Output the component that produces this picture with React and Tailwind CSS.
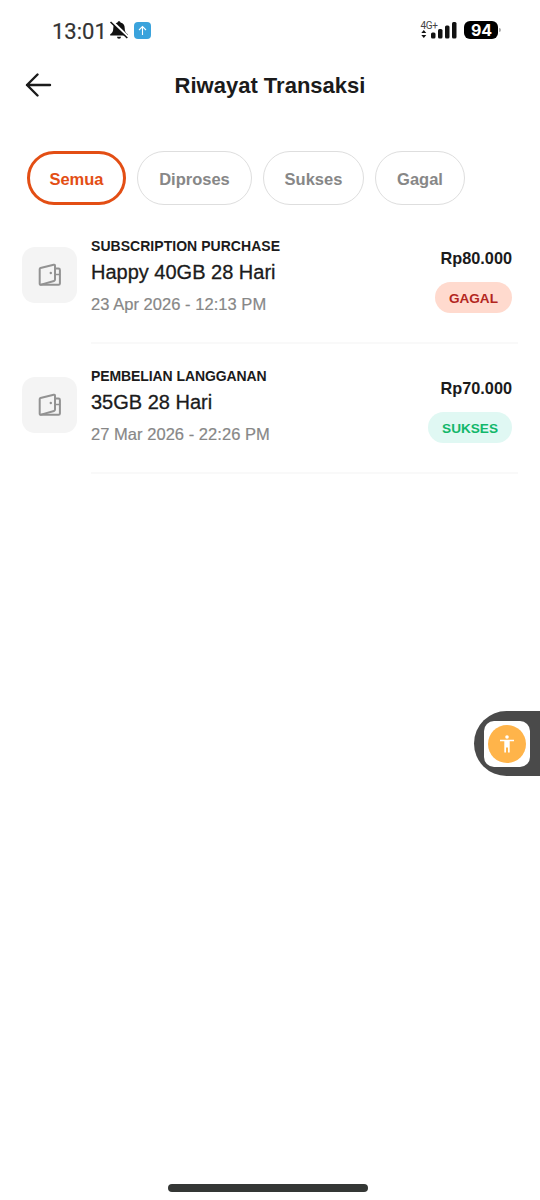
const transactions = [
  {
    id: 1,
    category: 'SUBSCRIPTION PURCHASE',
    name: 'Happy 40GB 28 Hari',
    date: '23 Apr 2026 - 12:13 PM',
    amount: 'Rp80.000',
    status: 'GAGAL',
    badge: 'bg-[#ffdace] text-[#b3261e]',
    tracking: 'tracking-[0.04px]',
  },
  {
    id: 2,
    category: 'PEMBELIAN LANGGANAN',
    name: '35GB 28 Hari',
    date: '27 Mar 2026 - 22:26 PM',
    amount: 'Rp70.000',
    status: 'SUKSES',
    badge: 'bg-[#e0f8f3] text-[#12b76a]',
    tracking: 'tracking-[-0.09px]',
  },
];

const filters = [
  { label: 'Semua', size: 'w-[99px]', active: true },
  { label: 'Diproses', size: 'w-[115px]' },
  { label: 'Sukses', size: 'w-[101px]' },
  { label: 'Gagal', size: 'w-[90px]' },
];

function StatusBar() {
  return (
    <div className="flex h-[60px] items-center justify-between pr-[39px] pl-[52px]">
      <div className="flex items-center">
        <span className="w-[57px] pt-[3px] font-['Roboto',sans-serif] text-[22px] leading-none text-[#333] [-webkit-text-stroke:0.2px_#333]">13:01</span>
        <svg className="h-5 w-5" viewBox="0 0 20 20">
          <path d="M10 1.2c-.9 0-1.4.6-1.5 1.4C5.500 3.300 4.300 5.500 4.300 8c0 3.500-1 4.900-3.100 6.300v1.300h17.600v-1.300C16.700 12.900 15.700 11.500 15.700 8c0-2.500-1.200-4.700-4.200-5.400C11.400 1.800 10.900 1.200 10 1.200z" fill="#111" />
          <path d="M8 16.800h4a2 2 0 0 1-4 0z" fill="#111" />
          <path d="M2.800 1.200 19.500 17.200" stroke="#fff" strokeWidth="2.600" />
          <path d="M1.500 2 18.300 18" stroke="#111" strokeWidth="1.600" />
        </svg>
        <span className="ml-[5px] flex h-[17px] w-[17px] items-center justify-center rounded-[4px] bg-[#3ba3dc]">
          <svg className="h-[11px] w-[11px]" viewBox="0 0 11 11" fill="none" stroke="#fff" strokeWidth="1.1">
            <path d="M5.500 10V1.500M2 5l3.500-3.500L9 5" />
          </svg>
        </span>
      </div>
      <div className="flex items-center">
        <svg className="h-[22px] w-[38px]" viewBox="0 0 38 22">
          <text x="0.500" y="9.500" fontFamily="Roboto, sans-serif" fontSize="10" fill="#444" textLength="17.500">4G+</text>
          <path d="M1.300 14 3.800 11l2.500 3zM1.300 16 3.800 19l2.500-3z" fill="#111" />
          <rect x="11" y="13.500" width="4.500" height="6" rx="1.500" fill="#111" />
          <rect x="18" y="10" width="4.500" height="9.500" rx="1.500" fill="#111" />
          <rect x="25" y="6.500" width="4.500" height="13" rx="1.500" fill="#111" />
          <rect x="32" y="3" width="4.500" height="16.500" rx="1.500" fill="#111" />
        </svg>
        <span className="ml-[6px] flex h-[18px] w-[34px] items-center justify-center rounded-[6px] bg-black pl-px font-['Inter',sans-serif] text-[16px] leading-none font-bold text-white">94</span>
        <span className="ml-px h-1 w-[2px] rounded-r-full bg-[#aaa]" />
      </div>
    </div>
  );
}

function WalletIcon() {
  return (
    <svg className="h-6 w-6" viewBox="0 0 24 24" fill="none" stroke="#929292" strokeWidth="2" strokeLinejoin="round" strokeLinecap="round">
      <path d="M1.700 5.900Q1.700 5.200 2.500 5L15.700 1.700Q17 1.400 17 2.700V16.600Q17 17.700 16 18L3 21.600Q1.700 22 1.700 20.800z" />
      <path d="M17 5.500h3.500q1.400 0 1.400 1.400v13.500q0 1.400-1.400 1.400H3" />
      <path d="M17.500 11.500h4" strokeWidth="1.600" />
      <circle cx="12.800" cy="10" r="1.200" fill="#929292" stroke="none" />
    </svg>
  );
}

function Transaction({ item }) {
  return (
    <li className="flex h-[130px] pl-[22px]">
      <div className="mt-[17px] flex h-[56px] w-[55px] shrink-0 items-center justify-center rounded-[13px] bg-[#f4f4f4]">
        <WalletIcon />
      </div>
      <div className="ml-[14px] flex h-[114px] w-[427px] justify-between border-b-2 border-[#f9f9f9] pr-[6px]">
        <div className="whitespace-nowrap">
          <div className={`mt-[8px] text-[14px] leading-4 font-bold text-[#1b1b1b] ${item.tracking}`}>{item.category}</div>
          <div className="mt-[6px] text-[20px] leading-6 text-[#1b1b1b] [-webkit-text-stroke:0.3px_#1b1b1b]">{item.name}</div>
          <div className="mt-[10px] text-[16.5px] leading-5 tracking-[0.04px] text-[#878787] [-webkit-text-stroke:0.2px_#878787]">{item.date}</div>
        </div>
        <div className="flex flex-col items-end">
          <div className="mt-[18px] text-[16.3px] leading-5 font-bold text-[#1b1b1b]">{item.amount}</div>
          <div className={`mt-[14px] flex h-[31px] items-center rounded-full px-[14px] pt-[2px] text-[13.6px] leading-none font-bold ${item.badge}`}>
            {item.status}
          </div>
        </div>
      </div>
    </li>
  );
}

export default function App() {
  return (
    <div className="relative flex h-[1200px] w-[540px] flex-col overflow-hidden bg-white font-['Liberation_Sans',Arial,sans-serif]">
      <StatusBar />
      <header className="grid h-[50px] grid-cols-[64px_1fr_64px] items-center">
        <button className="ml-[25px] h-6 w-[27px]" aria-label="Kembali">
          <svg className="h-6 w-[27px]" viewBox="0 0 27 24" fill="none" stroke="#1b1b1b" strokeWidth="2.400" strokeLinecap="round" strokeLinejoin="round">
            <path d="M25 12H2M12.500 1.500 2 12l10.500 10.500" />
          </svg>
        </button>
        <h1 className="pt-px text-center text-[22px] leading-7 font-bold text-[#1b1b1b]">Riwayat Transaksi</h1>
      </header>
      <nav className="mt-[41px] ml-[27px] flex gap-[11px]">
        {filters.map((f) => (
          <button
            key={f.label}
            className={`flex h-[54px] items-center justify-center rounded-full pt-[2px] text-[16.5px] font-bold ${f.size} ${
              f.active ? 'border-3 border-[#e34e14] text-[#e34e14]' : 'border-[1.5px] border-[#dedede] text-[#878787]'
            }`}
          >
            {f.label}
          </button>
        ))}
      </nav>
      <ul className="mt-[25px]">
        {transactions.map((item) => (
          <Transaction key={item.id} item={item} />
        ))}
      </ul>
      <button className="absolute top-[711px] right-0 flex h-[65px] w-[66px] items-center rounded-l-full bg-[#4a4a4a] pl-[10px]" aria-label="Aksesibilitas">
        <span className="flex h-[46px] w-[46px] items-center justify-center rounded-[10px] bg-white">
          <span className="flex h-[38px] w-[38px] items-center justify-center rounded-full bg-[#ffb44a]">
            <svg className="h-[18px] w-[14px]" viewBox="0 0 14 18" fill="#fff">
              <circle cx="7" cy="2" r="1.800" />
              <path d="M0 4.800h14v1.400H9.700V17.500H8v-5H6v5H4.300V6.200H0z" />
            </svg>
          </span>
        </span>
      </button>
      <div className="absolute top-[1184px] left-[168px] h-[8px] w-[200px] rounded-full bg-[#343735]" />
    </div>
  );
}
